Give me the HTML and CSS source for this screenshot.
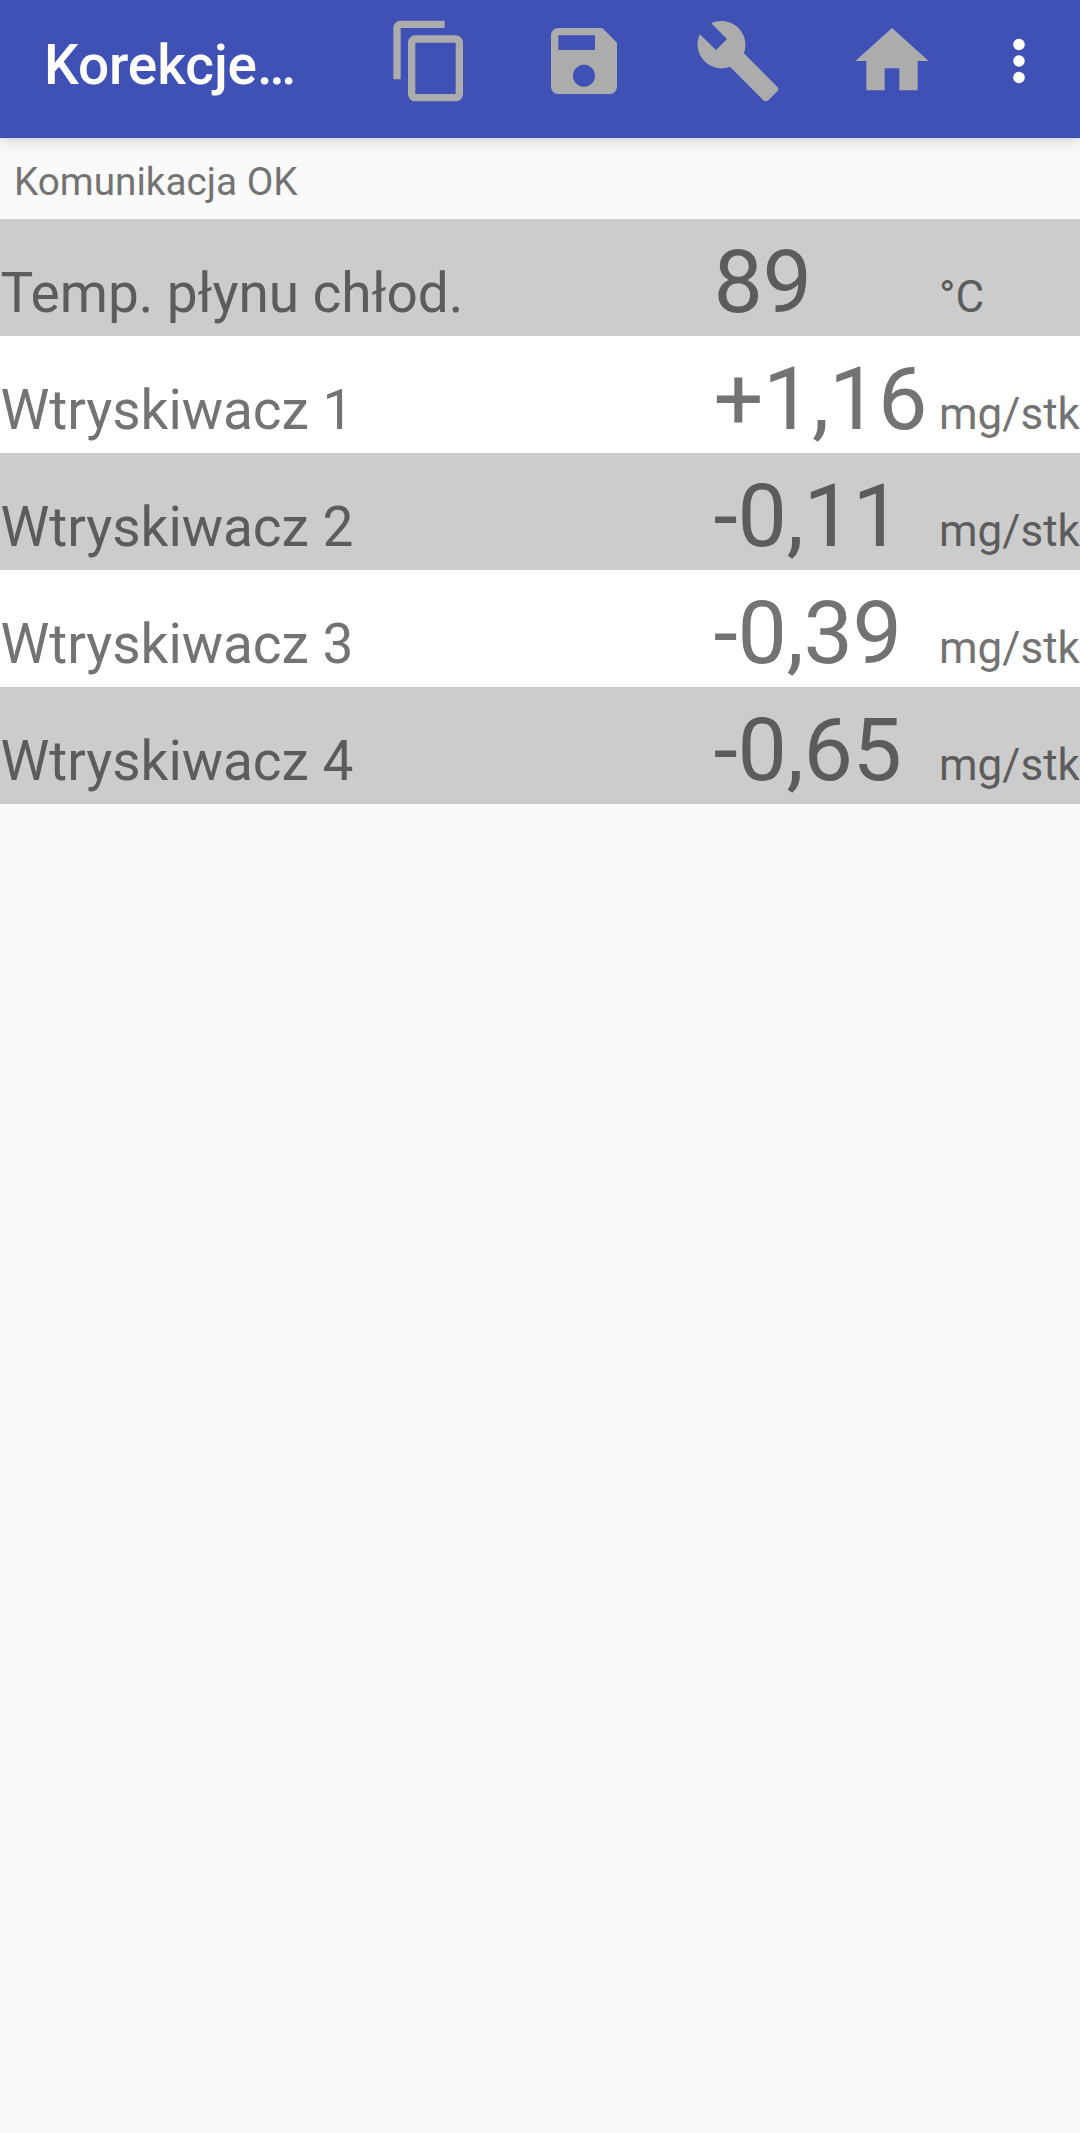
FILE: index.html
```
<!DOCTYPE html>
<html lang="pl">
<head>
<meta charset="utf-8">
<title>Korekcje</title>
<link rel="stylesheet" href="styles.css">
</head>
<body>
<header class="toolbar">
  <h1 class="title">Korekcje…</h1>
  <nav class="actions">
    <button class="action" aria-label="Kopiuj"><svg viewBox="0 0 24 24"><path d="M16 1H4c-1.100 0-2 .9-2 2v14h2V3h12V1zm3 4H8c-1.100 0-2 .9-2 2v14c0 1.100.9 2 2 2h11c1.100 0 2-.9 2-2V7c0-1.100-.9-2-2-2zm0 16H8V7h11v14z"/></svg></button>
    <button class="action" aria-label="Zapisz"><svg viewBox="0 0 24 24"><path d="M17 3H5c-1.110 0-2 .9-2 2v14c0 1.100.89 2 2 2h14c1.100 0 2-.9 2-2V7l-4-4zm-5 16c-1.660 0-3-1.340-3-3s1.340-3 3-3 3 1.340 3 3-1.340 3-3 3zm3-10H5V5h10v4z"/></svg></button>
    <button class="action" aria-label="Serwis"><svg viewBox="0 0 24 24"><path d="M22.700 19l-9.100-9.100c.9-2.300.4-5-1.500-6.900-2-2-5-2.400-7.400-1.300L9 6 6 9 1.600 4.700C.4 7.100.9 10.100 2.900 12.100c1.900 1.900 4.600 2.400 6.900 1.500l9.100 9.100c.4.4 1 .4 1.400 0l2.300-2.300c.5-.4.5-1.100.1-1.400z"/></svg></button>
    <button class="action" aria-label="Start"><svg viewBox="0 0 24 24"><path d="M10 20v-6h4v6h5v-8h3L12 3 2 12h3v8z"/></svg></button>
    <button class="action more" aria-label="Więcej"><svg viewBox="0 0 24 24"><circle cx="12" cy="6" r="2.100"/><circle cx="12" cy="12" r="2.100"/><circle cx="12" cy="18" r="2.100"/></svg></button>
  </nav>
</header>
<p class="status">Komunikacja OK</p>
<main class="readings">
  <div class="row"><span class="label">Temp. płynu chłod.</span><span class="value">89</span><span class="unit">°C</span></div>
  <div class="row"><span class="label">Wtryskiwacz 1</span><span class="value">+1,16</span><span class="unit">mg/stk</span></div>
  <div class="row"><span class="label">Wtryskiwacz 2</span><span class="value">-0,11</span><span class="unit">mg/stk</span></div>
  <div class="row"><span class="label">Wtryskiwacz 3</span><span class="value">-0,39</span><span class="unit">mg/stk</span></div>
  <div class="row"><span class="label">Wtryskiwacz 4</span><span class="value">-0,65</span><span class="unit">mg/stk</span></div>
</main>
</body>
</html>
```
FILE: styles.css
```
* { box-sizing: border-box; }

body {
  margin: 0;
  min-height: 2133px;
  background: #fafafa;
  color: #737373;
  font-family: Roboto, sans-serif;
  overflow-x: hidden;
}

.toolbar {
  display: flex;
  justify-content: space-between;
  height: 138px;
  padding-left: 44px;
  background: #3f51b5;
  box-shadow: 0 1px 0 #d5dcec, 0 3px 14px rgba(0, 0, 0, 0.16);
}

.title {
  margin: 0;
  padding-top: 33px;
  color: #fff;
  font-size: 55px;
  font-weight: 500;
  line-height: 64px;
  letter-spacing: -0.1px;
}

.actions {
  display: flex;
  height: 122.600px;
}

.action {
  display: flex;
  align-items: center;
  justify-content: center;
  width: 154px;
  padding: 0;
  border: 0;
  background: none;
}

.action svg {
  width: 88px;
  height: 88px;
  fill: #acacac;
}

.more {
  width: 111px;
  padding-right: 11px;
}

.more svg {
  width: 66px;
  height: 66px;
  fill: #fff;
}

.status {
  height: 81.400px;
  margin: 0;
  padding: 20px 14px 0;
  font-size: 38.700px;
  line-height: 47px;
}

.row {
  display: grid;
  grid-template-columns: 713.500px 225.500px 141px;
  align-items: baseline;
  height: 117px;
  padding-top: 11px;
  background: #fff;
  white-space: nowrap;
}

.row:nth-child(odd) {
  background: #ccc;
  color: #5c5c5c;
}

.label {
  padding-left: 0.5px;
  font-size: 55px;
  letter-spacing: -0.05px;
}

.value {
  font-size: 88px;
  line-height: 103px;
  letter-spacing: -0.4px;
}

.unit { font-size: 44px; }
```
